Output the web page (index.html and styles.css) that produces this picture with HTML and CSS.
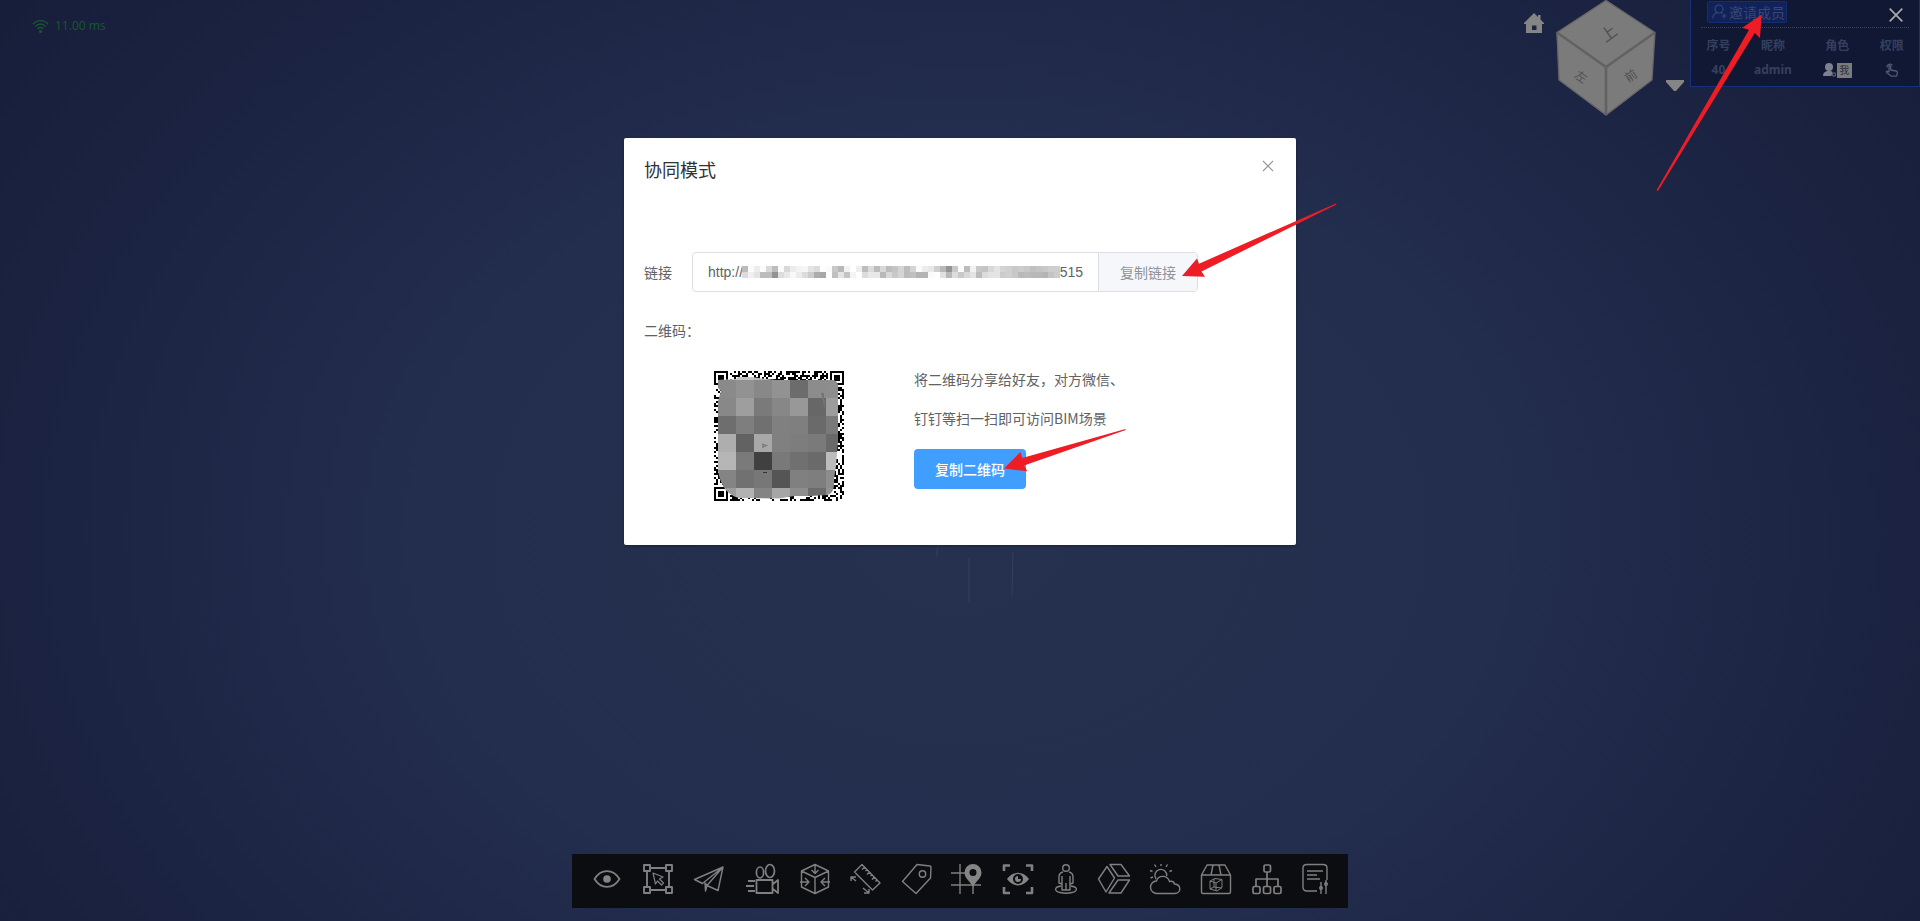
FILE: index.html
```
<!DOCTYPE html>
<html lang="zh-CN">
<head>
<meta charset="utf-8">
<title>协同模式</title>
<link rel="stylesheet" href="styles.css">
</head>
<body>
<div class="viewer">
  <header class="topbar">
    <div class="ping">
      <svg class="ping-icon" viewBox="0 0 18 16" fill="none" stroke="currentColor" stroke-width="1.5" aria-hidden="true">
        <path d="M1 5.5C5.500 .5 12.500 .5 17 5.500M3.500 8C7 4.500 11 4.500 14.500 8M6 10.500C8 8.700 10 8.700 12 10.500"/>
        <circle cx="9" cy="13.300" r="1.700" fill="currentColor" stroke="none"/>
      </svg>
      <span>11.00 ms</span>
    </div>

    <div class="nav">
      <button class="icon-button home" type="button" aria-label="主视图">
        <svg width="20" height="20" viewBox="0 0 20 20" fill="#858585"><path fill-rule="evenodd" d="M10 0l4 4V2h2.500v4.500L20 10v1h-2v9H2v-9H0v-1zM8 12.500V17h4.500v-4.500z"/></svg>
      </button>
      <svg class="cube" viewBox="0 0 100 116" role="img" aria-label="视图方块">
        <path d="M50 0L99 32.500 96 80 50 115.500 3 80 .5 32.500z" fill="#7b7b7b"/>
        <path d="M50 .5L99 32.500 96 80 50 115 3 80 1 32.500z" fill="none" stroke="#656565" stroke-width="1.300"/>
        <path d="M1 32.500L50 67 99 32.500M50 67v48" fill="none" stroke="#626262" stroke-width="2.600"/>
        <text class="face" transform="translate(53 34) rotate(-36)" x="0" y="5">上</text>
        <text class="face face-side" transform="translate(25 77) rotate(34)" x="0" y="4">左</text>
        <text class="face face-side" transform="translate(75 76) rotate(-34)" x="0" y="4">前</text>
      </svg>
      <button class="icon-button drop" type="button" aria-label="视图菜单">
        <svg width="18" height="12" viewBox="0 0 18 12" fill="#858585"><path d="M0 0h18v2L10 11H8L0 2z"/></svg>
      </button>
    </div>

    <section class="members">
      <div class="members-head">
        <button class="invite" type="button">
          <svg width="15" height="16" viewBox="0 0 15 16" fill="none" stroke="currentColor" stroke-width="1.200" aria-hidden="true"><circle cx="7" cy="5" r="4"/><path d="M.8 14.500C1 11 3 9 5.500 8.500M8.500 8.500l2 1M12 9.500v5M9.500 12h5"/></svg>
          <span>邀请成员</span>
        </button>
        <button class="icon-button" type="button" aria-label="关闭">
          <svg width="14" height="14" viewBox="0 0 14 14" stroke="#a8a8a8" stroke-width="1.800"><path d="M.7.7l12.600 12.600M13.300.7L.7 13.300"/></svg>
        </button>
      </div>
      <table class="members-table">
        <thead><tr><th class="c-id">序号</th><th class="c-name">昵称</th><th class="c-role">角色</th><th class="c-right">权限</th></tr></thead>
        <tbody><tr>
          <td>40</td><td>admin</td>
          <td><span class="role"><svg width="14" height="14" viewBox="0 0 14 14" fill="#7d8190" aria-hidden="true"><circle cx="6" cy="4" r="4"/><path d="M0 13c0-3 1.500-4 4-5h4l1.500 1-1 4z"/><circle cx="11" cy="11.500" r="1.700" fill="none" stroke="#5d6376" stroke-width="1.200"/></svg><span class="me">我</span></span></td>
          <td><svg width="14" height="14" viewBox="0 0 14 14" fill="none" stroke="#525b74" stroke-width="1.300" stroke-linejoin="round" aria-hidden="true"><path d="M2 4.500a3 3 0 0 1 5.500-2M4 9V3.500c0-1.300 1.700-1.300 1.700 0V7l5.300 1c1.200.3 1.500 1 1.300 2l-.8 3.200H6.500L1.500 9.500c-.5-1 .7-1.600 1.500-1z"/></svg></td>
        </tr></tbody>
      </table>
    </section>

    <svg class="arrow arrow-invite" viewBox="0 0 108 180" aria-hidden="true"><path d="M105.700 2.500L86.300 15.800 93 17.700 .5 178.300 2 179 98.700 21 104 26z"/></svg>
  </header>

  <main class="stage">
    <section class="dialog" role="dialog" aria-labelledby="dialog-title">
      <div class="dialog-head">
        <h1 id="dialog-title">协同模式</h1>
        <button class="icon-button dialog-close" type="button" aria-label="关闭对话框">
          <svg width="12" height="12" viewBox="0 0 12 12" stroke="#909399" stroke-width="1.100"><path d="M1 1l10 10M11 1L1 11"/></svg>
        </button>
      </div>
      <div class="link-row">
        <label for="link">链接</label>
        <div class="link-box">
          <div class="link-field">
            <input id="link" type="text" value="http://" readonly>
            <svg class="link-mask" viewBox="0 0 318 14" aria-hidden="true"></svg>
            <span>3515</span>
          </div>
          <button class="copy-link" type="button">复制链接</button>
        </div>
      </div>
      <p class="qr-label">二维码：</p>
      <div class="qr-row">
        <div class="qr-cell"><svg class="qr" viewBox="0 0 130 130" role="img" aria-label="二维码" shape-rendering="crispEdges">
          <defs><clipPath id="smear"><path d="M4 9L22 8 24 6H38L48 7.500 62 9H119Q124 10 124 15V70L122 95 120 108Q121 122 114 124L96 125 80 125 65 127.500 25 127Q8 123 4 100V30L7 20 4 17z"/></clipPath></defs>
          <g class="qr-modules"></g>
          <g class="qr-tiles" clip-path="url(#smear)"></g>
          <path d="M48 72l6 2.500-6 3z" fill="#858585"/><path d="M46 102l8-1.500-3 2z" fill="#333"/>
          <path d="M107 22h3l1 14h-1z" fill="#737373"/>
        </svg></div>
        <div class="qr-text">
          <p>将二维码分享给好友，对方微信、<br>钉钉等扫一扫即可访问BIM场景</p>
          <button class="copy-qr" type="button">复制二维码</button>
        </div>
      </div>
      <svg class="arrow arrow-link" viewBox="0 0 156 76" aria-hidden="true"><path d="M1 73L16 55.500 18 60.700 155 .5 155.500 1.500 20.500 68.500 24 73.700z"/></svg>
      <svg class="arrow arrow-qr" viewBox="0 0 124 46" aria-hidden="true"><path d="M1 40.500L17.500 24 19.200 30 122.500 1 122.700 2 21 37.500 24.300 43.300z"/></svg>
    </section>
    <svg class="trace" viewBox="0 0 120 60" fill="none" stroke="#364059" aria-hidden="true"><path d="M37 11V4l2-4M69 13v45M113 7l-1 43"/></svg>
  </main>

  <nav class="toolbar" aria-label="工具栏">
    <button type="button" aria-label="可见性"><svg viewBox="0 0 32 32"><path stroke-width="1.800" d="M3.500 16C10 5.500 22 5.500 28.500 16 22 26.500 10 26.500 3.500 16z"/><circle class="solid" cx="16" cy="16" r="3.800"/></svg></button>
    <button type="button" aria-label="框选"><svg viewBox="0 0 32 32"><path stroke-width="1.900" d="M2 2h6v6H2zM24 2h6v6h-6zM2 24h6v6H2zM24 24h6v6h-6zM8 5h16M8 27h16M5 8v16M27 8v16"/><path stroke-width="1.200" d="M11 10l10 4-3.500 2 4 4-2 2-4-4-2 3z"/></svg></button>
    <button type="button" aria-label="飞行"><svg viewBox="0 0 32 32"><path d="M30 4L1.500 16.500l8 4zM30 4L25 27.500l-11-5zM14 22.500L12.500 28 12 20z"/></svg></button>
    <button type="button" aria-label="漫游录制"><svg class="wide" viewBox="0 0 36 32"><path stroke-width="1.800" d="M12.500 17h16v13h-16zM29 21l5-4v13l-5-4M11 18H4M10 23H2M11 28H4"/><ellipse cx="16" cy="9.500" rx="3.600" ry="5.500" stroke-width="1.700"/><ellipse cx="26" cy="8" rx="4.500" ry="6.500" stroke-width="1.700"/></svg></button>
    <button type="button" aria-label="剖切"><svg viewBox="0 0 32 32"><path d="M16 1.500l13.500 6.500v16L16 30.500 2.500 24V8zM2.500 8L16 14.500 29.500 8M16 14.500v16M16 2v8M12.500 7L16 10.500 19.500 7M1 19h8M6 15l4 4-4 4M31 19h-8M26 15l-4 4 4 4"/></svg></button>
    <button type="button" aria-label="测量"><svg viewBox="0 0 32 32"><path d="M12 1.500L30 20 22.500 27 4.500 9zM14.500 4l-2.500 2.500M17 6.500L15.500 8M19.500 9L17 11.500M22 11.500L20.500 13M24.500 14L22 16.500M27 17l-1.500 1.500M1 18v-4h5M1 14l5 4M19 26v4h-5M19 30l-6-5"/></svg></button>
    <button type="button" aria-label="标签"><svg viewBox="0 0 32 32"><path d="M16 1.500L29 3q1 0 1 1L29.500 15 15 30.500 1.500 18.500z"/><circle cx="21.500" cy="11" r="3.200"/></svg></button>
    <button type="button" aria-label="地图定位"><svg viewBox="0 0 32 32"><path d="M9 1v30M22 21v10M0 10h15M0 22h30"/><path class="solid" fill-rule="evenodd" d="M22 1a8.500 8.500 0 0 1 8.500 8.500C30.500 15 26 17 22 24 18 17 13.500 15 13.500 9.500A8.500 8.500 0 0 1 22 1zm0 5a3.500 3.500 0 1 0 0 7 3.500 3.500 0 0 0 0-7z"/></svg></button>
    <button type="button" aria-label="视点"><svg viewBox="0 0 32 32"><path stroke-width="2.600" d="M2 8V2.500h6M24 2.500h6V8M30 24v6h-6M8 30H2v-6"/><path class="solid" fill-rule="evenodd" d="M5 16C11 7.500 21 7.500 27 16 21 24.500 11 24.500 5 16zm11-5a5 5 0 1 0 0 10 5 5 0 0 0 0-10z"/><path class="solid" d="M16 13a3 3 0 1 0 3 3h-3z"/></svg></button>
    <button type="button" aria-label="人物"><svg class="narrow" viewBox="3 0 26 32"><circle cx="16" cy="5" r="3.300"/><path d="M13 9q-4 1-4 5v6l3 1v6h8v-6l3-1v-6q0-4-4-5M12 13v8M20 13v8M16 20v7M11 23C4 24 4 28 10 29.500q6 1.500 12 0c6-1.500 6-5.500-1-6.500"/></svg></button>
    <button type="button" aria-label="分解"><svg viewBox="0 0 32 32"><path d="M12 1.500h11L31.500 13H20zM9 3.500l7.500 11.500L8 29 .5 16zM20 17h11.500L23 30H11z"/></svg></button>
    <button type="button" aria-label="天气"><svg viewBox="0 0 32 32"><path d="M8 30.500a6 6 0 0 1-.5-12.500C9 12 18.500 11.500 20.500 18.500q4-1 5 2.500c7 .5 7 9.500 0 9.500z"/><path d="M7 16A6 6 0 1 1 17.800 13M12 3V1M7 4L5.500 1.500M17 4l1.500-2.500M3.500 8.500L1 7.500M20.500 8.500l2.500-1M4 14l-2.500 1"/></svg></button>
    <button type="button" aria-label="模型库"><svg viewBox="0 0 32 32"><path d="M1.500 12v17q0 1.500 1.500 1.500h26q1.500 0 1.500-1.500V12zM1.500 12L7 2h18l5.500 10M13 2l-2 10M19 2l2 10"/><path stroke-width="1" d="M10 18l5-2.500 7 1v8L17 28l-7-2zM10 18l6 2 6-3.500M16 20v7.500M14 16v8l-4 2M14 24l8 1"/></svg></button>
    <button type="button" aria-label="结构树"><svg viewBox="0 0 32 32"><rect x="13" y="2" width="6.500" height="7" rx="1.500" stroke-width="1.700"/><path stroke-width="1.700" d="M16 9v14M5 23v-7h22v7"/><rect x="2" y="23.500" width="7" height="7" rx="1.500" stroke-width="1.700"/><rect x="12.500" y="23.500" width="7" height="7" rx="1.500" stroke-width="1.700"/><rect x="23" y="23.500" width="7" height="7" rx="1.500" stroke-width="1.700"/></svg></button>
    <button type="button" aria-label="设置"><svg class="narrow" viewBox="3 0 26 32"><path d="M18 28H8q-4 0-4-4V5q0-3.500 4-3.500h16q4 0 4 3.500v12M8 8h16M8 12h10M8 16h13M22 19v12M27 17v14"/><circle cx="22" cy="25" r="1.300"/><circle cx="27" cy="21" r="1.300"/></svg></button>
  </nav>
</div>
<script src="tiles.js"></script>
</body>
</html>
```
FILE: styles.css
```
* { box-sizing: border-box; }

body {
  margin: 0;
  background: #1b2442;
  color: #606266;
  font-family: "Liberation Sans", "Noto Sans CJK SC", sans-serif;
  font-size: 14px;
}

button { font: inherit; cursor: pointer; }
svg { display: block; flex: none; }
h1, p { margin: 0; font-weight: 400; }

.viewer {
  display: flex;
  flex-direction: column;
  min-height: 100vh;
  background: radial-gradient(ellipse 62% 95% at 50% 58%, #26314f 0%, #232d4d 45%, #1c2443 75%, #161e3a 100%);
}

.icon-button {
  padding: 0;
  border: 0;
  background: none;
}

/* top bar */
.topbar {
  position: relative;
  display: flex;
  align-items: flex-start;
  height: 138px;
}

.ping {
  display: flex;
  align-items: center;
  gap: 6px;
  margin: 16px auto 0 32px;
  color: #1c5630;
  font: 12px/20px "Open Sans", sans-serif;
}
.ping-icon { width: 17px; height: 15px; }

.nav { display: flex; align-items: flex-start; }
.home { margin: 13px 12px 0 0; }
.cube { width: 100px; height: 116px; }
.drop { margin: 80px 6px 0 10px; }
.face {
  fill: #505050;
  font: 16px "Noto Sans CJK SC", sans-serif;
  text-anchor: middle;
}
.face-side { font-size: 12px; }

.members {
  width: 230px;
  height: 87px;
  padding-left: 10px;
  border: 1px solid #15307c;
  border-top: 0;
  background: #101834;
  color: #35405f;
}
.members-head {
  display: flex;
  align-items: center;
  justify-content: space-between;
  height: 28px;
  margin-right: 10px;
  padding: 0 6px 4px;
  border-bottom: 1px dotted #3a4360;
}
.members-head .icon-button { padding-top: 6px; }
.invite {
  display: flex;
  align-items: center;
  gap: 2px;
  height: 22px;
  padding: 0 1px 0 4px;
  border: 1px solid #132d70;
  border-radius: 2px;
  background: #112159;
  color: #3a4770;
  font-family: "Noto Sans CJK SC", sans-serif;
  line-height: 20px;
}

.members-table {
  width: 100%;
  border-collapse: collapse;
  table-layout: fixed;
  font: bold 12px/24px "Noto Sans", "Noto Sans CJK SC", sans-serif;
  text-align: center;
}
.members-table th { height: 30px; padding: 5px 0 0; }
.members-table td { height: 24px; padding: 0; }
.c-id { width: 16%; }
.c-name { width: 34%; }
.c-role { width: 25%; }
.members-table svg { margin: 0 auto; }
.role { display: flex; align-items: center; justify-content: center; }
.members-table .role svg { margin: 0; }
.me {
  width: 15px;
  height: 15px;
  background: #7b7b7b;
  color: #2c3040;
  font-size: 10px;
  font-weight: 400;
  line-height: 15px;
}

/* dialog */
.stage {
  display: flex;
  flex: 1;
  flex-direction: column;
  align-items: center;
}
.dialog {
  position: relative;
  width: 35%;
  min-width: 600px;
  padding: 20px 20px 44px;
  border-radius: 2px;
  background: #fff;
  box-shadow: 0 1px 3px rgba(0, 0, 0, .3);
}
.dialog-head {
  display: flex;
  align-items: flex-start;
  justify-content: space-between;
  margin-bottom: 68px;
}
.dialog-head h1 {
  color: #303133;
  font-size: 18px;
  line-height: 26px;
}
.dialog-close { padding: 2px; }

.link-row {
  display: flex;
  align-items: center;
  gap: 20px;
}
.link-box {
  display: flex;
  flex: 0 0 506px;
  height: 40px;
  border: 1px solid #dcdfe6;
  border-radius: 4px;
}
.link-field {
  display: flex;
  flex: 1;
  align-items: center;
  padding-left: 15px;
}
.link-field input {
  width: 34px;
  height: 38px;
  padding: 0;
  border: 0;
  outline: 0;
  background: none;
  color: #606266;
  font: inherit;
}
.link-mask {
  z-index: 1;
  width: 318px;
  height: 14px;
  margin-right: -8px;
}
.copy-link {
  width: 99px;
  padding: 0 20px;
  border: 0;
  border-left: 1px solid #dcdfe6;
  border-radius: 0 3px 3px 0;
  background: #f5f7fa;
  color: #909399;
  white-space: nowrap;
}

.qr-label { margin: 20px 0 10px; line-height: 38px; }
.qr-row { display: flex; padding-left: 70px; }
.qr-cell { width: 200px; padding-top: 11px; }
.qr { width: 130px; height: 130px; }
.qr-text p {
  margin-bottom: 11px;
  font-family: "Noto Sans CJK SC", sans-serif;
  line-height: 39px;
}
.copy-qr {
  height: 40px;
  padding: 0 21px;
  border: 0;
  border-radius: 4px;
  background: #409eff;
  color: #fff;
  font-weight: 500;
}

.trace { width: 120px; height: 60px; }

/* pointer arrows lie over the interface */
.arrow { position: absolute; fill: #ee1c24; pointer-events: none; }
.arrow-invite { top: 12px; right: 156px; width: 108px; height: 180px; z-index: 2; }
.arrow-link { top: 65px; right: -41px; width: 156px; height: 76px; }
.arrow-qr { top: 290px; left: 379px; width: 124px; height: 46px; }

/* toolbar */
.toolbar {
  display: flex;
  align-items: center;
  justify-content: space-between;
  align-self: center;
  width: 776px;
  height: 54px;
  margin-bottom: 13px;
  padding: 0 20px 0 19px;
  background: #0c0d10;
}
.toolbar button {
  padding: 0 0 4px;
  border: 0;
  background: none;
}
.toolbar svg {
  width: 32px;
  height: 32px;
  overflow: visible;
  fill: none;
  stroke: #808080;
  stroke-width: 1.4;
  stroke-linejoin: round;
}
.toolbar .wide { width: 36px; }
.toolbar .narrow { width: 26px; }
.toolbar .solid { fill: #858585; stroke: none; }
```
FILE: tiles.js
```
const NS = "http://www.w3.org/2000/svg";

function rect(parent, x, y, w, h, fill) {
  const r = document.createElementNS(NS, "rect");
  const attrs = { x, y, width: w, height: h, fill };
  for (const key in attrs) r.setAttribute(key, attrs[key]);
  parent.appendChild(r);
}

// QR modules: 65 x 65, two units each, with three finder squares
const modules = document.querySelector(".qr-modules");
let seed = 20;
const corners = [[0, 0], [58, 0], [0, 58]];
for (let y = 0; y < 65; y++) {
  for (let x = 0; x < 65; x++) {
    seed = (seed * 1103515245 + 12345) % 2147483648;
    const reserved = corners.some(([a, b]) => x >= a - 1 && x <= a + 7 && y >= b - 1 && y <= b + 7);
    if (!reserved && seed / 2147483648 > 0.48) rect(modules, x * 2, y * 2, 2, 2, "#000");
  }
}
for (const [a, b] of corners) {
  rect(modules, a * 2, b * 2, 14, 14, "#000");
  rect(modules, a * 2 + 2, b * 2 + 2, 10, 10, "#fff");
  rect(modules, a * 2 + 4, b * 2 + 4, 6, 6, "#000");
}

// grey tiles over the code
const tiles = document.querySelector(".qr-tiles");
[
  "c4 c4 b8 c8 c4 c4 c4",
  "8a 92 88 92 6c 8c 8d",
  "88 9e 7a 87 98 67 9c",
  "6e 7e 70 80 7f 6a 79",
  "ae 62 a8 80 7d 7a 69",
  "b6 7a 40 79 70 6a bc",
  "84 71 77 55 80 7e 8c",
  "9c b2 84 a6 8d 6c 92"
].forEach((row, r) => row.split(" ").forEach((c, i) => {
  rect(tiles, 4 + i * 18, r * 18 - 9, 18, 18, "#" + c + c + c);
}));

// masked middle part of the link, two rows of six-unit cells
const mask = document.querySelector(".link-mask");
[
  "bc fb ec fb d8 bc fb d8 ec f4 f6 e4 dc ff fb c8 b8 f2 ff ee bc dc bc d8 bc c4 d4 bc d4 fb ec e8 d0 b8 94 c8 fb bc f2 c8 c4 d8 e4 d4 d0 c8 cc c8 c0 c4 c8 ce ce",
  "dc f0 e4 bc bc 92 dc e8 f8 ec dc cc ac a8 ff c0 e4 c4 f4 ff dc e8 e8 b8 d8 c8 d4 bc c0 b4 b4 fb ff e0 b8 dc c8 d8 e4 bc dc e4 e4 cc d0 c8 b8 bc b8 b8 b4 c4 cc"
].forEach((row, r) => row.split(" ").forEach((c, i) => {
  rect(mask, i * 6, 1 + r * 6, 6, 6, "#" + c + c + c);
}));
```
